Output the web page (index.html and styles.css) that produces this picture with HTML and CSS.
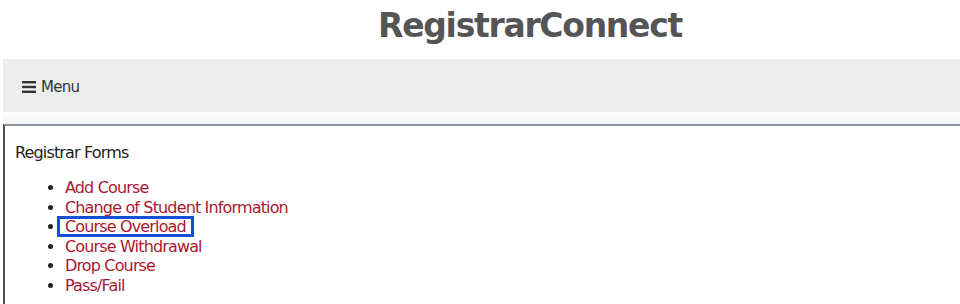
FILE: index.html
```html
<!DOCTYPE html>
<html lang="en">
<head>
  <meta charset="UTF-8">
  <meta name="viewport" content="width=device-width, initial-scale=1.0">
  <title>RegistrarConnect</title>
  <link rel="stylesheet" href="styles.css">
</head>
<body>
  <h1 class="site-title">RegistrarConnect</h1>
  <div class="menu-bar">
    <a class="menu-toggle" href="#">
      <svg class="menu-icon" width="14" height="12" viewBox="0 0 14 12">
        <rect x="0" y="0" width="14" height="2.4" />
        <rect x="0" y="4.8" width="14" height="2.4" />
        <rect x="0" y="9.6" width="14" height="2.4" />
      </svg>
      <span>Menu</span>
    </a>
  </div>
  <div class="menu-shadow"></div>
  <div class="content">
    <p class="forms-title">Registrar Forms</p>
    <ul class="forms-list">
      <li><a href="#">Add Course</a></li>
      <li><a href="#">Change of Student Information</a></li>
      <li><a href="#" class="focused">Course Overload</a></li>
      <li><a href="#">Course Withdrawal</a></li>
      <li><a href="#">Drop Course</a></li>
      <li><a href="#">Pass/Fail</a></li>
    </ul>
  </div>
</body>
</html>
```

FILE: styles.css
```css
* {
  margin: 0;
  padding: 0;
  box-sizing: border-box;
}
body {
  font-family: "DejaVu Sans", Verdana, sans-serif;
  color: #222;
  background: #fff;
}
.site-title {
  height: 59px;
  padding: 9px 0 0 100px;
  text-align: center;
  font-size: 33px;
  line-height: 33px;
  font-weight: bold;
  letter-spacing: -1.3px;
  color: #555;
}
.menu-bar {
  margin-left: 3px;
  height: 53px;
  background-color: #ededed;
  display: flex;
  align-items: center;
  padding-left: 19px;
}
.menu-toggle {
  display: flex;
  align-items: center;
  gap: 5px;
  color: #333;
  text-decoration: none;
  font-size: 15px;
  letter-spacing: -0.7px;
  padding-top: 2px;
}
.menu-icon {
  fill: #333;
}
.menu-shadow {
  margin-left: 3px;
  height: 12px;
  background: linear-gradient(#fff, #f3f3f3);
}
.content {
  margin-left: 3px;
  border-top: 2px solid #8b929e;
  border-left: 2px solid #5b4a3f;
  padding: 17px 10px 20px;
  font-size: 16px;
  letter-spacing: -0.85px;
}
.forms-title {
  line-height: 20px;
}
.forms-list {
  margin-top: 15px;
  padding-left: 50px;
  line-height: 19.6px;
}
.forms-list a {
  color: #a8182f;
  text-decoration: none;
}
.forms-list a.focused {
  padding: 0 7px 0 7px;
  margin-left: -7px;
  outline: 3px solid #1250d6;
  outline-offset: -2px;
}
```
